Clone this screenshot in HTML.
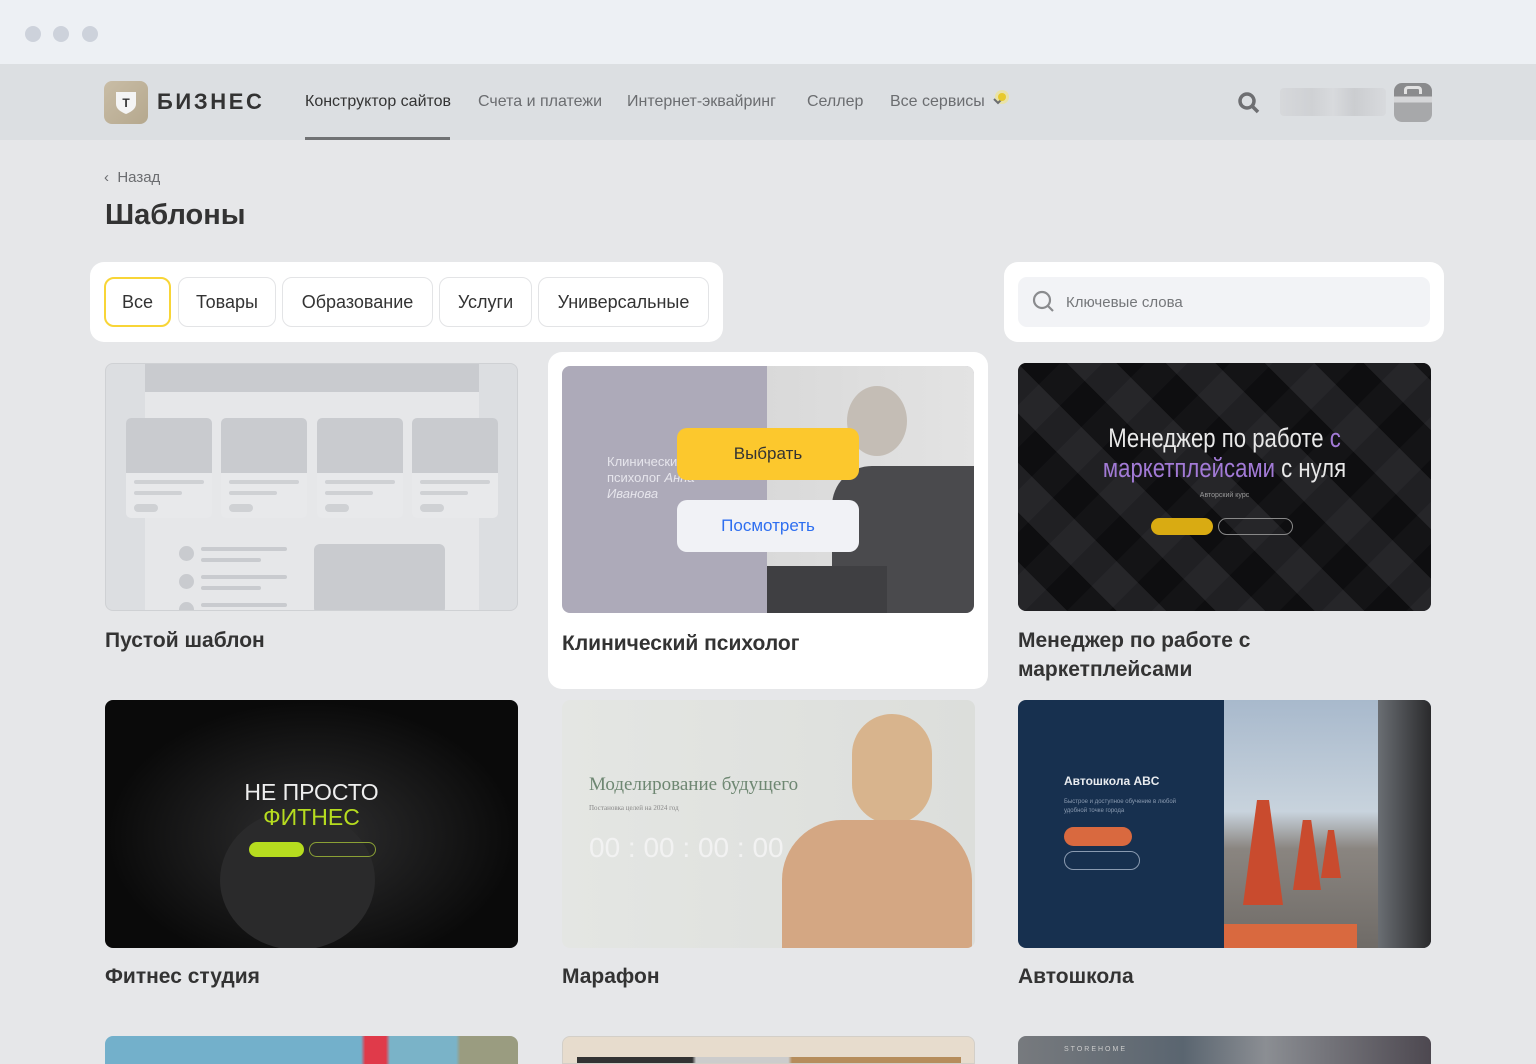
<!DOCTYPE html>
<html><head><meta charset="utf-8"><style>
*{margin:0;padding:0;box-sizing:border-box}
html,body{width:1536px;height:1064px;overflow:hidden}
body{background:#e6e7e9;font-family:"Liberation Sans",sans-serif;position:relative;color:#333}
.a{position:absolute}
.top{left:0;top:0;width:1536px;height:64px;background:#edf0f4}
.dot{width:16px;height:16px;border-radius:50%;background:#cdd2db;top:26px}
.nav{left:0;top:64px;width:1536px;height:76px;background:#dcdfe2}
.ni{top:93px;font-size:16px;color:#6b6d70}
.chip{top:277px;height:50px;border:1px solid #e3e4e6;border-radius:10px;font-size:18px;color:#333;display:flex;align-items:center;justify-content:center;background:#fff}
.img{border-radius:8px;overflow:hidden;width:413px;height:248px}
.tt{font-size:21px;font-weight:bold;color:#333;line-height:29px}
</style></head><body>
<div class="a top"></div>
<div class="a dot" style="left:25px"></div><div class="a dot" style="left:53px"></div><div class="a dot" style="left:82px"></div>
<div class="a nav"></div>
<div class="a" style="left:104px;top:81px;width:44px;height:43px;border-radius:8px;background:linear-gradient(135deg,#c9bda6,#b5a88e)"></div>
<svg class="a" style="left:112px;top:89px" width="28" height="28" viewBox="0 0 28 28"><path d="M4 3h20v12c0 5-5 8-10 10C9 23 4 20 4 15z" fill="#f4f4f4"/><text x="14" y="18" font-size="12" font-weight="bold" text-anchor="middle" fill="#333" font-family="Liberation Sans">T</text></svg>
<div class="a" style="left:157px;top:89px;font-size:22px;font-weight:bold;color:#333;letter-spacing:2.6px">БИЗНЕС</div>
<div class="a ni" style="left:305px;color:#333">Конструктор сайтов</div>
<div class="a" style="left:305px;top:137px;width:145px;height:3px;background:#707274"></div>
<div class="a ni" style="left:478px">Счета и платежи</div>
<div class="a ni" style="left:627px">Интернет-эквайринг</div>
<div class="a ni" style="left:807px">Селлер</div>
<div class="a ni" style="left:890px">Все сервисы</div>
<svg class="a" style="left:990px;top:88px" width="24" height="22"><circle cx="12" cy="9" r="7" fill="#e9e2a8"/><path d="M4 11l4 4 4-4" stroke="#6b6d70" stroke-width="2" fill="none"/><circle cx="12" cy="9" r="4" fill="#e7c92d"/></svg>
<svg class="a" style="left:1236px;top:90px" width="26" height="26"><circle cx="11" cy="11" r="7" stroke="#6e6f72" stroke-width="3.5" fill="none"/><path d="M16 16l6 6" stroke="#6e6f72" stroke-width="3.5"/></svg>
<div class="a" style="left:1280px;top:88px;width:106px;height:28px;border-radius:4px;background:linear-gradient(90deg,#d6d8db,#cfd1d4 30%,#d8dadd 50%,#cbcdd0 70%,#d8dadd)"></div>
<div class="a" style="left:1394px;top:83px;width:38px;height:39px;border-radius:8px;background:linear-gradient(#8a8b8d 0 35%,#d5d6d8 35% 50%,#a7a8aa 50%)"></div>
<div class="a" style="left:1404px;top:86px;width:18px;height:8px;border:3px solid #e2e2e2;border-bottom:none;border-radius:4px 4px 0 0"></div>

<div class="a" style="left:104px;top:169px;font-size:15px;color:#6b6d70">‹&nbsp; Назад</div>
<div class="a" style="left:105px;top:199px;font-size:29px;font-weight:bold;color:#333">Шаблоны</div>

<div class="a" style="left:90px;top:262px;width:633px;height:80px;background:#fff;border-radius:14px"></div>
<div class="a chip" style="left:104px;width:67px;border:2px solid #f8d537">Все</div>
<div class="a chip" style="left:178px;width:98px">Товары</div>
<div class="a chip" style="left:282px;width:151px">Образование</div>
<div class="a chip" style="left:439px;width:93px">Услуги</div>
<div class="a chip" style="left:538px;width:171px">Универсальные</div>

<div class="a" style="left:1004px;top:262px;width:440px;height:80px;background:#fff;border-radius:14px"></div>
<div class="a" style="left:1018px;top:277px;width:412px;height:50px;background:#f2f3f6;border-radius:9px"></div>
<svg class="a" style="left:1032px;top:290px" width="24" height="24"><circle cx="10" cy="10" r="8" stroke="#8a8b8e" stroke-width="2.2" fill="none"/><path d="M16 16l5 5" stroke="#8a8b8e" stroke-width="2.2"/></svg>
<div class="a" style="left:1066px;top:294px;font-size:15px;color:#75777a">Ключевые слова</div>

<!-- card 1 empty -->
<div class="a img" style="left:105px;top:363px;background:#dcdee1;border:1px solid #cfd1d4">
 <div class="a" style="left:39px;top:0;width:334px;height:248px;background:#e6e7e9"></div>
 <div class="a" style="left:39px;top:0;width:334px;height:28px;background:#c9cbcf"></div>
 <div class="a" style="left:20px;top:54px;width:86px;height:100px;background:#e8e9eb;border-radius:5px;overflow:hidden"><div style="height:55px;background:#c9cbcf"></div><div style="margin:7px 8px;height:4px;background:#cfd1d4;border-radius:2px"></div><div style="margin:5px 30px 0 8px;height:4px;background:#cfd1d4;border-radius:2px"></div><div style="margin:9px 54px 0 8px;height:8px;background:#cfd1d4;border-radius:4px"></div></div>
 <div class="a" style="left:115px;top:54px;width:86px;height:100px;background:#e8e9eb;border-radius:5px;overflow:hidden"><div style="height:55px;background:#c9cbcf"></div><div style="margin:7px 8px;height:4px;background:#cfd1d4;border-radius:2px"></div><div style="margin:5px 30px 0 8px;height:4px;background:#cfd1d4;border-radius:2px"></div><div style="margin:9px 54px 0 8px;height:8px;background:#cfd1d4;border-radius:4px"></div></div>
 <div class="a" style="left:211px;top:54px;width:86px;height:100px;background:#e8e9eb;border-radius:5px;overflow:hidden"><div style="height:55px;background:#c9cbcf"></div><div style="margin:7px 8px;height:4px;background:#cfd1d4;border-radius:2px"></div><div style="margin:5px 30px 0 8px;height:4px;background:#cfd1d4;border-radius:2px"></div><div style="margin:9px 54px 0 8px;height:8px;background:#cfd1d4;border-radius:4px"></div></div>
 <div class="a" style="left:306px;top:54px;width:86px;height:100px;background:#e8e9eb;border-radius:5px;overflow:hidden"><div style="height:55px;background:#c9cbcf"></div><div style="margin:7px 8px;height:4px;background:#cfd1d4;border-radius:2px"></div><div style="margin:5px 30px 0 8px;height:4px;background:#cfd1d4;border-radius:2px"></div><div style="margin:9px 54px 0 8px;height:8px;background:#cfd1d4;border-radius:4px"></div></div>
 <div class="a" style="left:73px;top:182px;width:15px;height:15px;border-radius:50%;background:#c9cbcf"></div>
 <div class="a" style="left:73px;top:210px;width:15px;height:15px;border-radius:50%;background:#c9cbcf"></div>
 <div class="a" style="left:73px;top:238px;width:15px;height:15px;border-radius:50%;background:#c9cbcf"></div>
 <div class="a" style="left:95px;top:183px;width:86px;height:4px;background:#c9cbcf;border-radius:2px"></div>
 <div class="a" style="left:95px;top:194px;width:60px;height:4px;background:#c9cbcf;border-radius:2px"></div>
 <div class="a" style="left:95px;top:211px;width:86px;height:4px;background:#c9cbcf;border-radius:2px"></div>
 <div class="a" style="left:95px;top:222px;width:60px;height:4px;background:#c9cbcf;border-radius:2px"></div>
 <div class="a" style="left:95px;top:239px;width:86px;height:4px;background:#c9cbcf;border-radius:2px"></div>
 <div class="a" style="left:208px;top:180px;width:131px;height:70px;background:#c9cbcf;border-radius:6px"></div>
</div>
<div class="a tt" style="left:105px;top:626px">Пустой шаблон</div>

<!-- card 2 highlighted -->
<div class="a" style="left:548px;top:352px;width:440px;height:337px;background:#fff;border-radius:14px"></div>
<div class="a img" style="left:562px;top:366px;width:412px;height:247px;background:#adaab9">
 <div class="a" style="left:205px;top:0;width:207px;height:247px;background:linear-gradient(90deg,#d9d9d9,#e3e3e3)"></div>
 <div class="a" style="left:285px;top:20px;width:60px;height:70px;border-radius:50%;background:#c4bdb5"></div>
 <div class="a" style="left:270px;top:100px;width:142px;height:147px;background:#4a4a4d;border-radius:40px 0 0 0"></div>
 <div class="a" style="left:205px;top:200px;width:120px;height:47px;background:#3f3f42"></div>
 <div class="a" style="left:45px;top:88px;font-size:13px;color:#e6e5ec;line-height:16px">Клинический<br>психолог <i>Анна</i><br><i>Иванова</i></div>
 <div class="a" style="left:115px;top:62px;width:182px;height:52px;background:#fcc82d;border-radius:10px;font-size:17px;color:#333;display:flex;align-items:center;justify-content:center">Выбрать</div>
 <div class="a" style="left:115px;top:134px;width:182px;height:52px;background:#f1f2f6;border-radius:10px;font-size:17px;color:#2e6ff0;display:flex;align-items:center;justify-content:center">Посмотреть</div>
</div>
<div class="a tt" style="left:562px;top:629px">Клинический психолог</div>

<!-- card 3 -->
<div class="a img" style="left:1018px;top:363px;background:repeating-linear-gradient(135deg,#141416 0 30px,#222225 30px 60px),#111">
 <div class="a" style="left:0;top:0;width:413px;height:248px;background:repeating-linear-gradient(45deg,rgba(40,40,44,.6) 0 35px,rgba(10,10,12,.6) 35px 70px)"></div>
 <div class="a" style="left:0;top:60px;width:413px;text-align:center;font-size:27px;color:#e8e8e8;line-height:30px;transform:scaleX(0.82)">Менеджер по работе <span style="color:#a27ad6">с</span><br><span style="color:#a27ad6">маркетплейсами</span> с нуля</div>
 <div class="a" style="left:0;top:129px;width:413px;text-align:center;font-size:7px;color:#999">Авторский курс</div>
 <div class="a" style="left:133px;top:155px;width:62px;height:17px;border-radius:9px;background:#d9ab12"></div>
 <div class="a" style="left:200px;top:155px;width:75px;height:17px;border-radius:9px;border:1px solid #888"></div>
</div>
<div class="a tt" style="left:1018px;top:626px">Менеджер по работе с<br>маркетплейсами</div>

<!-- row2 -->
<div class="a img" style="left:105px;top:700px;background:radial-gradient(ellipse at 50% 55%,#2f2f30,#0a0a0a 70%)">
 <div class="a" style="left:115px;top:110px;width:155px;height:140px;border-radius:50%;background:#2a2a2b"></div>
 <div class="a" style="left:0;top:80px;width:413px;text-align:center;font-size:23px;color:#eee;line-height:25px">НЕ ПРОСТО<br><span style="color:#b6dc1f">ФИТНЕС</span></div>
 <div class="a" style="left:144px;top:142px;width:55px;height:15px;border-radius:8px;background:#b6dc1f"></div>
 <div class="a" style="left:204px;top:142px;width:67px;height:15px;border-radius:8px;border:1px solid #8aa035"></div>
</div>
<div class="a tt" style="left:105px;top:962px">Фитнес студия</div>

<div class="a img" style="left:562px;top:700px;background:linear-gradient(90deg,#e4e6e3,#dcdedb)">
 <div class="a" style="left:290px;top:14px;width:80px;height:110px;border-radius:40px;background:#d8b48d"></div>
 <div class="a" style="left:220px;top:120px;width:190px;height:130px;border-radius:60px 60px 0 0;background:#d4a783"></div>
 <div class="a" style="left:27px;top:74px;font-family:'Liberation Serif',serif;font-size:19px;color:#6e8772">Моделирование будущего</div>
 <div class="a" style="left:27px;top:104px;font-family:'Liberation Serif',serif;font-size:7px;color:#888">Постановка целей на 2024 год</div>
 <div class="a" style="left:27px;top:132px;font-size:28px;color:#f2f2f2">00 : 00 : 00 : 00</div>
</div>
<div class="a tt" style="left:562px;top:962px">Марафон</div>

<div class="a img" style="left:1018px;top:700px;background:#17304f">
 <div class="a" style="left:206px;top:0;width:207px;height:248px;background:linear-gradient(#a8b9cc,#c8d3dd 45%,#8a8580 60%,#6f6b67)"></div>
 <div class="a" style="left:360px;top:0;width:53px;height:248px;background:linear-gradient(90deg,#6a6e73,#2a2a2c)"></div>
 <div class="a" style="left:225px;top:100px;width:40px;height:105px;background:#c94b2e;clip-path:polygon(35% 0,65% 0,100% 100%,0 100%)"></div>
 <div class="a" style="left:275px;top:120px;width:28px;height:70px;background:#c94b2e;clip-path:polygon(35% 0,65% 0,100% 100%,0 100%)"></div>
 <div class="a" style="left:303px;top:130px;width:20px;height:48px;background:#c94b2e;clip-path:polygon(35% 0,65% 0,100% 100%,0 100%)"></div>
 <div class="a" style="left:206px;top:224px;width:133px;height:24px;background:#d9693f"></div>
 <div class="a" style="left:46px;top:74px;font-size:12px;font-weight:bold;color:#e8ebef">Автошкола ABC</div>
 <div class="a" style="left:46px;top:98px;font-size:6px;color:#8a9ab0;line-height:9px">Быстрое и доступное обучение в любой<br>удобной точке города</div>
 <div class="a" style="left:46px;top:127px;width:68px;height:19px;border-radius:10px;background:#d9693f"></div>
 <div class="a" style="left:46px;top:151px;width:76px;height:19px;border-radius:10px;border:1px solid #8a9ab0"></div>
</div>
<div class="a tt" style="left:1018px;top:962px">Автошкола</div>

<!-- row3 -->
<div class="a img" style="left:105px;top:1036px;height:28px;border-radius:8px 8px 0 0;background:linear-gradient(90deg,#73b0cb 0 62%,#e03a4a 63% 68%,#7ab3c8 69% 85%,#9a9c80 86%)"></div>
<div class="a img" style="left:562px;top:1036px;height:28px;border-radius:8px 8px 0 0;background:#e7dccd;border:1px solid #d3cfc8"><div class="a" style="left:14px;top:20px;width:384px;height:10px;background:linear-gradient(90deg,#333 0 30%,#ccc 31% 55%,#b68d5c 56%)"></div></div>
<div class="a img" style="left:1018px;top:1036px;height:28px;border-radius:8px 8px 0 0;background:linear-gradient(90deg,#777a7e,#5a6570 40%,#8b8e93 60%,#4d4850)"><div class="a" style="left:46px;top:10px;font-size:7px;color:#ccc;letter-spacing:2px">STOREHOME</div></div>
</body></html>
